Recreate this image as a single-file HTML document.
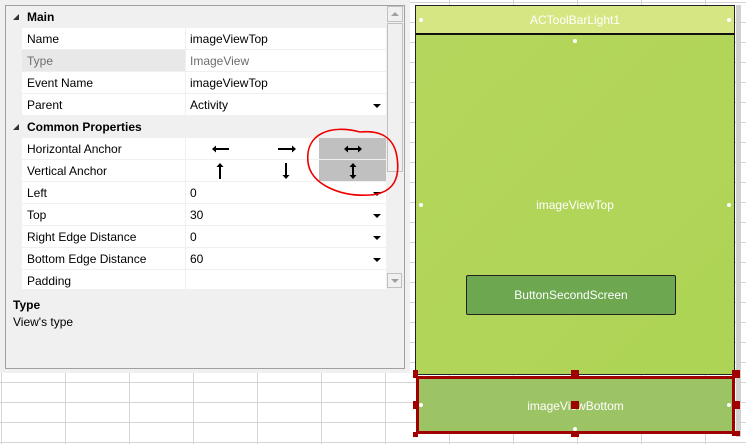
<!DOCTYPE html>
<html><head><style>
*{margin:0;padding:0;box-sizing:border-box}
body{width:746px;height:444px;overflow:hidden;position:relative;background:#fff;font-family:"Segoe UI","Liberation Sans",sans-serif;font-size:12px;color:#000;
background-image:linear-gradient(to right,#d4d4d4 1px,transparent 1px),linear-gradient(to bottom,#d4d4d4 1px,transparent 1px);
background-size:64px 20px;background-position:1px 2px}
.abs{position:absolute}
.panel{left:0;top:0;width:410px;height:373px;background:#f0f0f0}
.inner{left:5px;top:5px;width:400px;height:364px;border:1px solid #a0a0a0;background:#f0f0f0}
.row{position:absolute;left:22px;width:364px;height:22px;background:#fff;border-bottom:1px solid #f0f0f0}
.row .n{position:absolute;left:5px;top:4px}
.row .v{position:absolute;left:168px;top:4px}
.row .sep{position:absolute;left:163px;top:0;width:1px;height:22px;background:#f0f0f0}
.hdr{position:absolute;left:6px;width:380px;height:22px;background:#f0f0f0;font-weight:bold}
.hdr span{position:absolute;left:21px;top:4px}
.hdr i{position:absolute;left:7px;top:8px;width:0;height:0;border-left:6px solid transparent;border-bottom:6px solid #333}
.dd{position:absolute;right:5px;top:10px;width:0;height:0;border-left:4px solid transparent;border-right:4px solid transparent;border-top:4px solid #000}
.gr{color:#6d6d6d}
.dot{position:absolute;width:4px;height:4px;border-radius:2px;background:#fff}
.h{position:absolute;width:8px;height:8px;background:#a00000}
.wt{color:#fff;position:absolute;width:100%;text-align:center;font-size:12px}
</style></head><body>
<div class="abs panel"></div>
<div class="abs inner"></div>
<div class="hdr" style="top:6px"><i></i><span>Main</span></div>
<div class="row" style="top:28px"><span class="n">Name</span><div class="sep"></div><span class="v">imageViewTop</span></div>
<div class="row" style="top:50px"><span class="n gr" style="left:0;top:0;width:163px;height:21px;background:#e8e8e8;padding:4px 5px">Type</span><div class="sep"></div><span class="v gr">ImageView</span></div>
<div class="row" style="top:72px"><span class="n">Event Name</span><div class="sep"></div><span class="v">imageViewTop</span></div>
<div class="row" style="top:94px"><span class="n">Parent</span><div class="sep"></div><span class="v">Activity</span><div class="dd"></div></div>
<div class="hdr" style="top:116px"><i></i><span>Common Properties</span></div>
<div class="row" style="top:138px"><span class="n">Horizontal Anchor</span><div class="sep"></div>
<svg class="abs" style="left:189px;top:6px" width="20" height="10"><path d="M2 5H18" stroke="#000" stroke-width="2"/><path d="M1 5L5 1.5V8.5Z" fill="#000"/></svg>
<svg class="abs" style="left:255px;top:6px" width="20" height="10"><path d="M1 5H17" stroke="#000" stroke-width="2"/><path d="M19 5L15 1.5V8.5Z" fill="#000"/></svg>
<div class="abs" style="left:297px;top:0;width:67px;height:21px;background:#c0c0c0"><svg class="abs" style="left:24px;top:6px" width="20" height="10"><path d="M3 5H17" stroke="#000" stroke-width="2"/><path d="M1 5L5 1.5V8.5Z M19 5L15 1.5V8.5Z" fill="#000"/></svg></div></div>
<div class="row" style="top:160px"><span class="n">Vertical Anchor</span><div class="sep"></div>
<svg class="abs" style="left:193px;top:2px" width="10" height="18"><path d="M5 3V17" stroke="#000" stroke-width="2"/><path d="M5 1L1.5 5H8.5Z" fill="#000"/></svg>
<svg class="abs" style="left:259px;top:2px" width="10" height="18"><path d="M5 1V15" stroke="#000" stroke-width="2"/><path d="M5 17L1.5 13H8.5Z" fill="#000"/></svg>
<div class="abs" style="left:297px;top:0;width:67px;height:21px;background:#c0c0c0"><svg class="abs" style="left:29px;top:2px" width="10" height="18"><path d="M5 3V15" stroke="#000" stroke-width="2"/><path d="M5 1L1.5 5H8.5Z M5 17L1.5 13H8.5Z" fill="#000"/></svg></div></div>
<div class="row" style="top:182px"><span class="n">Left</span><div class="sep"></div><span class="v">0</span><div class="dd"></div></div>
<div class="row" style="top:204px"><span class="n">Top</span><div class="sep"></div><span class="v">30</span><div class="dd"></div></div>
<div class="row" style="top:226px"><span class="n">Right Edge Distance</span><div class="sep"></div><span class="v">0</span><div class="dd"></div></div>
<div class="row" style="top:248px"><span class="n">Bottom Edge Distance</span><div class="sep"></div><span class="v">60</span><div class="dd"></div></div>
<div class="row" style="top:270px;height:19px;border:0"><span class="n">Padding</span><div class="sep"></div></div>
<div class="abs" style="left:387px;top:6px;width:16px;height:16px;border:1px solid #c0c0c0;background:#f0f0f0"><div class="abs" style="left:3px;top:5px;border-left:4px solid transparent;border-right:4px solid transparent;border-bottom:4px solid #a0a0a0"></div></div>
<div class="abs" style="left:387px;top:23px;width:16px;height:149px;border:1px solid #c0c0c0;background:#f0f0f0"></div>
<div class="abs" style="left:387px;top:273px;width:15px;height:15px;border:1px solid #c0c0c0;background:#f0f0f0"><div class="abs" style="left:3px;top:5px;border-left:4px solid transparent;border-right:4px solid transparent;border-top:4px solid #a0a0a0"></div></div>
<div class="abs" style="left:13px;top:298px;font-weight:bold">Type</div>
<div class="abs" style="left:13px;top:315px">View's type</div>
<svg class="abs" style="left:300px;top:122px" width="104" height="82"><path d="M60 10 C30 2,5 12,8 40 C10 62,40 75,70 73 C95 71,100 55,97 35 C94 15,80 8,60 10" fill="none" stroke="#e00" stroke-width="1.6"/></svg>

<div class="abs" style="left:736px;top:5px;width:5px;height:432px;background:#d0d0d0"></div>
<div class="abs" style="left:415px;top:5px;width:320px;height:30px;background:#d6e682;border:1px solid #222;border-bottom:2px solid #111"><div class="wt" style="top:7px">ACToolBarLight1</div></div>
<div class="abs" style="left:415px;top:35px;width:320px;height:340px;background:linear-gradient(135deg,#b5d65c,#add455);border:1px solid #222;border-top:0"><div class="wt" style="top:163px">imageViewTop</div>
<div class="abs" style="left:50px;top:240px;width:210px;height:40px;background:#6da850;border:1px solid #222;border-radius:2px"><div class="wt" style="top:12px">ButtonSecondScreen</div></div></div>
<div class="abs" style="left:416px;top:376px;width:319px;height:58px;background:#9cc465;border:3px solid #a00000"><div class="wt" style="top:20px">imageViewBottom</div></div>
<div class="dot" style="left:419px;top:18px"></div><div class="dot" style="left:727px;top:18px"></div>
<div class="dot" style="left:573px;top:39px"></div>
<div class="dot" style="left:419px;top:203px"></div><div class="dot" style="left:727px;top:203px"></div>
<div class="dot" style="left:419px;top:403px"></div><div class="dot" style="left:727px;top:403px"></div>
<div class="dot" style="left:573px;top:427px"></div>
<div class="h" style="left:571px;top:370px"></div><div class="h" style="left:571px;top:401px"></div>
<div class="h" style="left:732px;top:370px"></div><div class="h" style="left:732px;top:401px"></div>
<div class="h" style="left:732px;top:431px;height:5px"></div><div class="h" style="left:571px;top:432px;height:5px"></div>
<div class="h" style="left:413px;top:432px;width:5px;height:5px"></div><div class="h" style="left:413px;top:370px;width:5px"></div>
<div class="h" style="left:413px;top:401px;width:5px"></div>
</body></html>
